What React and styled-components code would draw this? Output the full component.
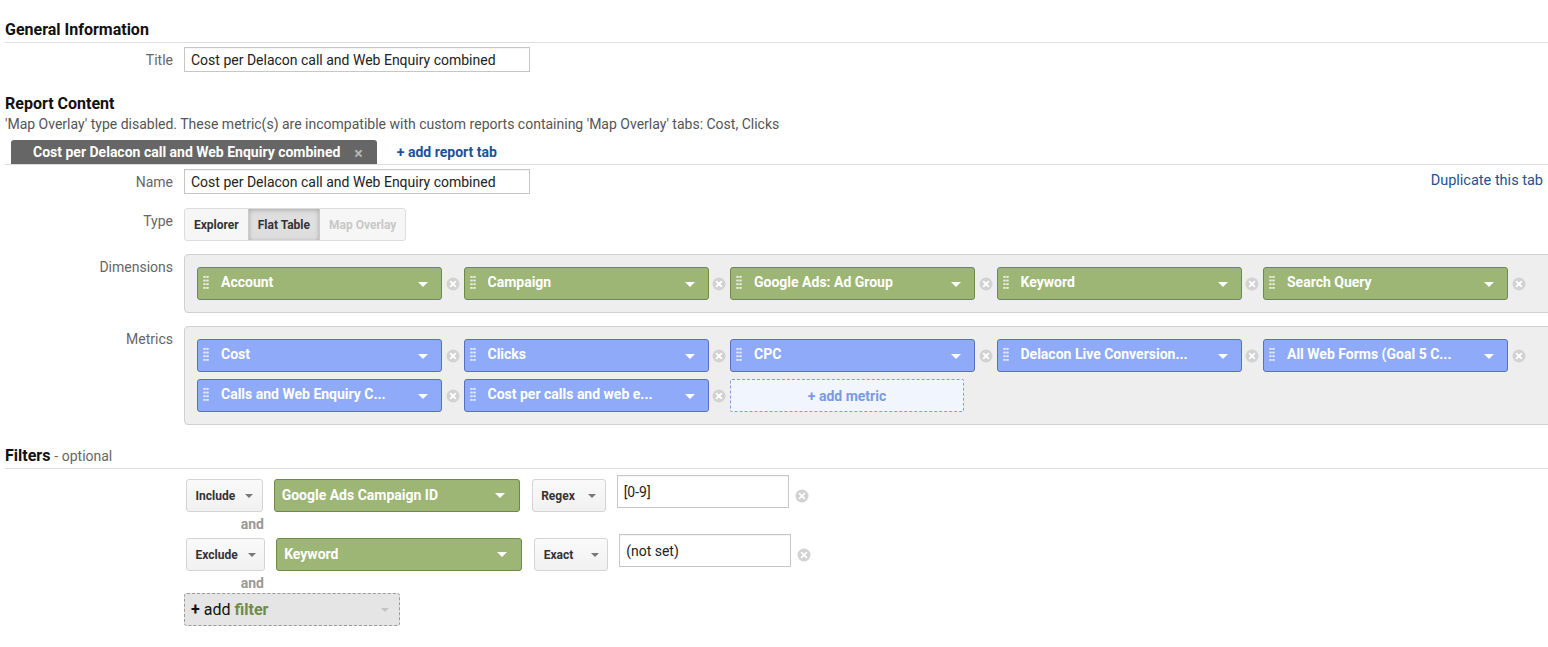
import styled, { createGlobalStyle } from 'styled-components';

const GlobalStyle = createGlobalStyle`
  body {
    margin: 0;
    background: #fff;
    font-family: Roboto, "Liberation Sans", Arial, sans-serif;
    font-size: 14px;
    color: #222;
    overflow: hidden;
  }
`;

const Page = styled.div`
  padding: 0 0 0 5px;
`;

const SectionHeading = styled.div`
  font-size: 16px;
  font-weight: bold;
  line-height: 20px;
  color: #111;
  margin-top: ${props => props.$gap || '21px'};
  padding-bottom: ${props => (props.$ruled ? '2px' : '0')};
  border-bottom: ${props => (props.$ruled ? '1px solid #ddd' : 'none')};
`;

const Optional = styled.span`
  font-size: 14px;
  font-weight: normal;
  color: #666;
`;

const Notice = styled.div`
  margin-top: 1px;
  line-height: 18px;
  color: #555;
`;

const FieldRow = styled.div`
  display: flex;
  align-items: flex-start;
  gap: 11px;
  margin-top: ${props => props.$top || '0'};
`;

const Label = styled.div`
  flex: 0 0 168px;
  text-align: right;
  color: #666;
  line-height: 20px;
  padding-top: 3px;
`;

const TextInput = styled.div`
  box-sizing: border-box;
  width: ${props => props.$width || '346px'};
  height: ${props => props.$height || '25px'};
  border: 1px solid #c6c6c6;
  padding: 0 6px;
  display: flex;
  align-items: center;
  color: #222;
  background: #fff;
  box-shadow: inset 0 1px 1px rgba(0, 0, 0, 0.04);
`;

const TabBar = styled.div`
  display: flex;
  align-items: flex-end;
  margin-top: 7px;
  border-bottom: 1px solid #ddd;
`;

const ActiveTab = styled.div`
  margin-left: 6px;
  height: 24px;
  padding: 0 14px 0 22px;
  background: #666;
  border-radius: 3px 3px 0 0;
  display: flex;
  align-items: center;
  gap: 14px;
  color: #fff;
  font-weight: bold;
`;

const TabClose = styled.span`
  color: #b5b5b5;
  font-size: 16px;
  font-weight: bold;
  margin-top: 3px;
`;

const AddTab = styled.div`
  margin-left: 20px;
  height: 24px;
  display: flex;
  align-items: center;
  color: #1b5298;
  font-weight: bold;
`;

const Spacer = styled.div`
  flex: 1;
`;

const LinkText = styled.div`
  color: #1b5298;
  font-size: 14.5px;
  margin-right: 5px;
  line-height: 20px;
  padding-top: 2px;
`;

const ButtonGroup = styled.div`
  display: flex;
  height: 33px;
  box-sizing: border-box;
  border: 1px solid #ddd;
  border-radius: 3px;
  background: #f6f6f6;
  overflow: hidden;
`;

const GroupButton = styled.div`
  display: flex;
  align-items: center;
  padding: 0 9px;
  font-size: 12px;
  font-weight: bold;
  color: ${props => (props.$disabled ? '#c8c8c8' : '#333')};
  background: ${props => (props.$pressed ? '#dedede' : 'transparent')};
  box-shadow: ${props => (props.$pressed ? 'inset 0 1px 4px rgba(0,0,0,0.25)' : 'none')};
  border-left: ${props => (props.$pressed ? '1px solid #ccc' : 'none')};
  border-right: ${props => (props.$pressed ? '1px solid #ccc' : 'none')};
`;

const Panel = styled.div`
  flex: 0 0 1380px;
  box-sizing: border-box;
  background: #eee;
  border: 1px solid #d0d0d0;
  border-radius: 4px;
  padding: 12px;
  display: flex;
  flex-direction: column;
  gap: 7px;
`;

const ChipRow = styled.div`
  display: flex;
  align-items: center;
`;

const palettes = {
  green: { bg: '#9db675', border: '#6d8a46' },
  blue: { bg: '#8eaaf8', border: '#5671c4' }
};

const Chip = styled.div`
  box-sizing: border-box;
  width: 245px;
  height: 33px;
  flex: 0 0 auto;
  background: ${props => palettes[props.$tone].bg};
  border: 1px solid ${props => palettes[props.$tone].border};
  border-radius: 3px;
  display: flex;
  align-items: flex-start;
  padding: 5px 13px 0 5px;
  color: #fff;
  font-weight: bold;
  font-size: 14px;
  line-height: 18px;
`;

const Grip = styled.div`
  width: 6px;
  height: 15px;
  margin: 2px 12px 0 0;
  background-image: radial-gradient(circle, rgba(255, 255, 255, 0.8) 1px, transparent 1.3px);
  background-size: 3px 3.7px;
`;

const ChipText = styled.div`
  flex: 1;
  white-space: nowrap;
  overflow: hidden;
`;

const Caret = styled.div`
  width: 0;
  height: 0;
  border-left: 5px solid transparent;
  border-right: 5px solid transparent;
  border-top: 5px solid #fff;
  margin-top: ${props => props.$top || '9px'};
`;

const RemoveSlot = styled.div`
  flex: 0 0 21.5px;
  display: flex;
  justify-content: center;
  align-items: center;
`;

const AddMetric = styled.div`
  box-sizing: border-box;
  width: 234px;
  height: 33px;
  border: 1px dashed #7f9de2;
  border-radius: 2px;
  background: #f1f5fd;
  color: #7c99e6;
  font-weight: bold;
  display: flex;
  align-items: center;
  justify-content: center;
`;

const FilterArea = styled.div`
  display: flex;
  flex-direction: column;
  margin-top: 6px;
`;

const FilterRow = styled.div`
  display: flex;
  align-items: flex-start;
  margin-left: 2px;
`;

const SelectButton = styled.div`
  box-sizing: border-box;
  width: ${props => props.$width || 'auto'};
  height: 33px;
  margin-top: 4px;
  margin-right: 11px;
  padding: 0 8.5px;
  border: 1px solid #d4d4d4;
  border-radius: 3px;
  background: linear-gradient(#fafafa, #f1f1f1);
  display: flex;
  align-items: center;
  justify-content: space-between;
  gap: 10px;
  font-size: 12px;
  font-weight: bold;
  color: #333;
`;

const SmallCaret = styled.div`
  width: 0;
  height: 0;
  border-left: 4px solid transparent;
  border-right: 4px solid transparent;
  border-top: 4px solid ${props => props.$color || '#777'};
`;

const FieldSelect = styled.div`
  box-sizing: border-box;
  width: 246px;
  height: 33px;
  margin-top: 4px;
  margin-right: 12px;
  background: #9db675;
  border: 1px solid #6d8a46;
  border-radius: 3px;
  display: flex;
  align-items: flex-start;
  padding: 6px 14px 0 7px;
  color: #fff;
  font-weight: bold;
  line-height: 18px;
`;

const RemoveWrap = styled.div`
  margin: 14px 0 0 6px;
`;

const AndText = styled.div`
  width: 80px;
  text-align: right;
  line-height: 20px;
  margin-top: 2px;
  color: #999;
  font-weight: bold;
`;

const AddFilter = styled.div`
  box-sizing: border-box;
  width: 216px;
  height: 33px;
  border: 1px dashed #9a9a9a;
  border-radius: 3px;
  background: #e5e5e5;
  display: flex;
  align-items: center;
  padding: 0 10px 0 6px;
  font-size: 16px;
  color: #111;
`;

const Plus = styled.b`
  margin-right: 4px;
`;

const FilterWord = styled.b`
  color: #6f8c48;
  margin-left: 4px;
  flex: 1;
`;

const RemoveIcon = () => (
  <svg width="14" height="14" viewBox="0 0 14 14">
    <circle cx="7" cy="7" r="6.5" fill="#d2d2d2" />
    <path d="M4.6 4.6 L9.4 9.4 M9.4 4.6 L4.6 9.4" stroke="#fff" strokeWidth="1.8" strokeLinecap="round" />
  </svg>
);

const dimensions = ['Account', 'Campaign', 'Google Ads: Ad Group', 'Keyword', 'Search Query'];
const metricRows = [
  ['Cost', 'Clicks', 'CPC', 'Delacon Live Conversion...', 'All Web Forms (Goal 5 C...'],
  ['Calls and Web Enquiry C...', 'Cost per calls and web e...']
];

const Item = ({ tone, label }) => (
  <>
    <Chip $tone={tone}>
      <Grip />
      <ChipText>{label}</ChipText>
      <Caret />
    </Chip>
    <RemoveSlot>
      <RemoveIcon />
    </RemoveSlot>
  </>
);

const filters = [
  { mode: 'Include', field: 'Google Ads Campaign ID', match: 'Regex', value: '[0-9]' },
  { mode: 'Exclude', field: 'Keyword', match: 'Exact', value: '(not set)' }
];

const App = () => {
  const tabTitle = 'Cost per Delacon call and Web Enquiry combined';

  return (
    <Page>
      <GlobalStyle />
      <SectionHeading $gap="20px" $ruled>General Information</SectionHeading>
      <FieldRow $top="4px">
        <Label>Title</Label>
        <TextInput>{tabTitle}</TextInput>
      </FieldRow>

      <SectionHeading $gap="22px">Report Content</SectionHeading>
      <Notice>
        'Map Overlay' type disabled. These metric(s) are incompatible with custom reports containing 'Map Overlay' tabs: Cost, Clicks
      </Notice>
      <TabBar>
        <ActiveTab>
          {tabTitle}
          <TabClose>×</TabClose>
        </ActiveTab>
        <AddTab>+ add report tab</AddTab>
      </TabBar>

      <FieldRow $top="4px">
        <Label>Name</Label>
        <TextInput>{tabTitle}</TextInput>
        <Spacer />
        <LinkText>Duplicate this tab</LinkText>
      </FieldRow>

      <FieldRow $top="14px">
        <Label>Type</Label>
        <ButtonGroup>
          <GroupButton>Explorer</GroupButton>
          <GroupButton $pressed>Flat Table</GroupButton>
          <GroupButton $disabled>Map Overlay</GroupButton>
        </ButtonGroup>
      </FieldRow>

      <FieldRow $top="13px">
        <Label>Dimensions</Label>
        <Panel>
          <ChipRow>
            {dimensions.map(name => (
              <Item key={name} tone="green" label={name} />
            ))}
          </ChipRow>
        </Panel>
      </FieldRow>

      <FieldRow $top="13px">
        <Label>Metrics</Label>
        <Panel>
          {metricRows.map((row, i) => (
            <ChipRow key={i}>
              {row.map(name => (
                <Item key={name} tone="blue" label={name} />
              ))}
              {i === metricRows.length - 1 && <AddMetric>+ add metric</AddMetric>}
            </ChipRow>
          ))}
        </Panel>
      </FieldRow>

      <SectionHeading $ruled>
        Filters <Optional>- optional</Optional>
      </SectionHeading>
      <FieldRow>
        <Label />
        <FilterArea>
          {filters.map(f => (
            <div key={f.mode}>
              <FilterRow>
                <SelectButton>
                  {f.mode}
                  <SmallCaret />
                </SelectButton>
                <FieldSelect>
                  <ChipText>{f.field}</ChipText>
                  <Caret $top="7px" />
                </FieldSelect>
                <SelectButton $width="74px">
                  {f.match}
                  <SmallCaret />
                </SelectButton>
                <TextInput $width="172px" $height="33px">{f.value}</TextInput>
                <RemoveWrap>
                  <RemoveIcon />
                </RemoveWrap>
              </FilterRow>
              <AndText>and</AndText>
            </div>
          ))}
          <AddFilter>
            <Plus>+</Plus>add<FilterWord>filter</FilterWord>
            <SmallCaret $color="#c4c4c4" />
          </AddFilter>
        </FilterArea>
      </FieldRow>
    </Page>
  );
};

export default App;
